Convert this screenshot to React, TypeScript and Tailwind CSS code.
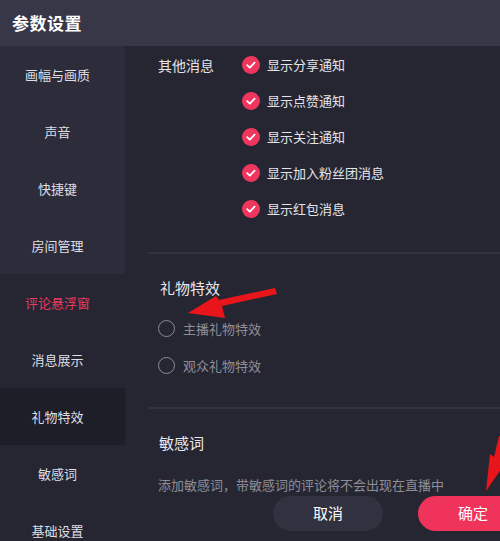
import React from "react";

const font = { fontFamily: '"Noto Sans CJK SC", "Noto Sans", sans-serif' };

const navItems = [
  { label: "画幅与画质", bg: "bg-[#2c2c3a]" },
  { label: "声音", bg: "bg-[#2c2c3a]" },
  { label: "快捷键", bg: "bg-[#2c2c3a]" },
  { label: "房间管理", bg: "bg-[#2c2c3a]" },
  { label: "评论悬浮窗", bg: "", active: true },
  { label: "消息展示", bg: "" },
  { label: "礼物特效", bg: "bg-[#1e1e28]" },
  { label: "敏感词", bg: "" },
  { label: "基础设置", bg: "" },
];

const checks = ["显示分享通知", "显示点赞通知", "显示关注通知", "显示加入粉丝团消息", "显示红包消息"];

function CheckIcon() {
  return (
    <svg width="18" height="18" viewBox="0 0 18 18">
      <circle cx="9" cy="9" r="9" fill="#f0365e" />
      <path d="M5.2 9.2 L7.8 11.6 L12.6 6.6" fill="none" stroke="#fff" strokeWidth="1.8" strokeLinecap="round" strokeLinejoin="round" />
    </svg>
  );
}

function Radio() {
  return <div className="w-[17px] h-[17px] rounded-full border-[1.5px] border-[#8c8c96] shrink-0" />;
}

export default function App() {
  return (
    <div className="w-[500px] h-[541px] overflow-hidden bg-[#262632] flex flex-col relative" style={font}>
      <div className="h-[46px] bg-[#373747] flex items-center pl-[12px] shrink-0">
        <span className="text-[17px] font-bold text-white tracking-[0.5px]">参数设置</span>
      </div>
      <div className="flex flex-1 min-h-0">
        <div className="w-[125px] shrink-0 flex flex-col">
          {navItems.map((it) => (
            <div
              key={it.label}
              className={`h-[57px] shrink-0 flex items-center justify-center pr-[10px] text-[13px] ${it.bg} ${
                it.active ? "text-[#e8395e]" : "text-[#dedee4]"
              }`}
            >
              {it.label}
            </div>
          ))}
        </div>
        <div className="flex-1 relative">
          <div className="ml-[23px] flex flex-col pt-[1px]">
            <div className="flex pl-[10px]">
              <div className="w-[84px] h-[36px] flex items-center text-[14px] text-[#e4e4ea]">其他消息</div>
              <div className="flex flex-col">
                {checks.map((c) => (
                  <div key={c} className="h-[36px] flex items-center gap-[7px] text-[13px] text-[#e4e4ea]">
                    <CheckIcon />
                    <span>{c}</span>
                  </div>
                ))}
              </div>
            </div>
            <div className="h-[2px] bg-[#32323f] mt-[25px]" />
            <div className="pl-[12px] pt-[24px] h-[44px] text-[15px] text-[#e8e8ee] leading-[20px]">礼物特效</div>
            <div className="pl-[10px] flex flex-col mt-[12px]">
              {["主播礼物特效", "观众礼物特效"].map((r) => (
                <div key={r} className="h-[37px] flex items-center gap-[8px] text-[13px] text-[#8e8e98]">
                  <Radio />
                  <span>{r}</span>
                </div>
              ))}
            </div>
            <div className="h-[2px] bg-[#32323f] mt-[23px]" />
            <div className="pl-[11px] pt-[24px] h-[44px] text-[15px] text-[#e8e8ee] leading-[20px]">敏感词</div>
            <div className="pl-[10px] mt-[22px] text-[13px] leading-[20px] text-[#8e8e98] whitespace-nowrap">
              添加敏感词，带敏感词的评论将不会出现在直播中
            </div>
          </div>
          <div className="absolute left-[148px] top-[450px] flex gap-[35px]">
            <button className="w-[110px] h-[35px] rounded-full bg-[#31313f] text-white text-[15px]">取消</button>
            <button className="w-[110px] h-[35px] rounded-full bg-[#f0335b] text-white text-[15px]">确定</button>
          </div>
        </div>
      </div>
      <svg className="absolute left-0 top-0 pointer-events-none" width="500" height="541" viewBox="0 0 500 541">
        <polygon points="275,288 277,294 222,306 225,318 188,313 216,296 219,300" fill="#e8161a" />
        <polygon points="503,436 507,440 501,463 504,465 486,491 490,454 494,457 499,436" fill="#e8161a" />
      </svg>
    </div>
  );
}
